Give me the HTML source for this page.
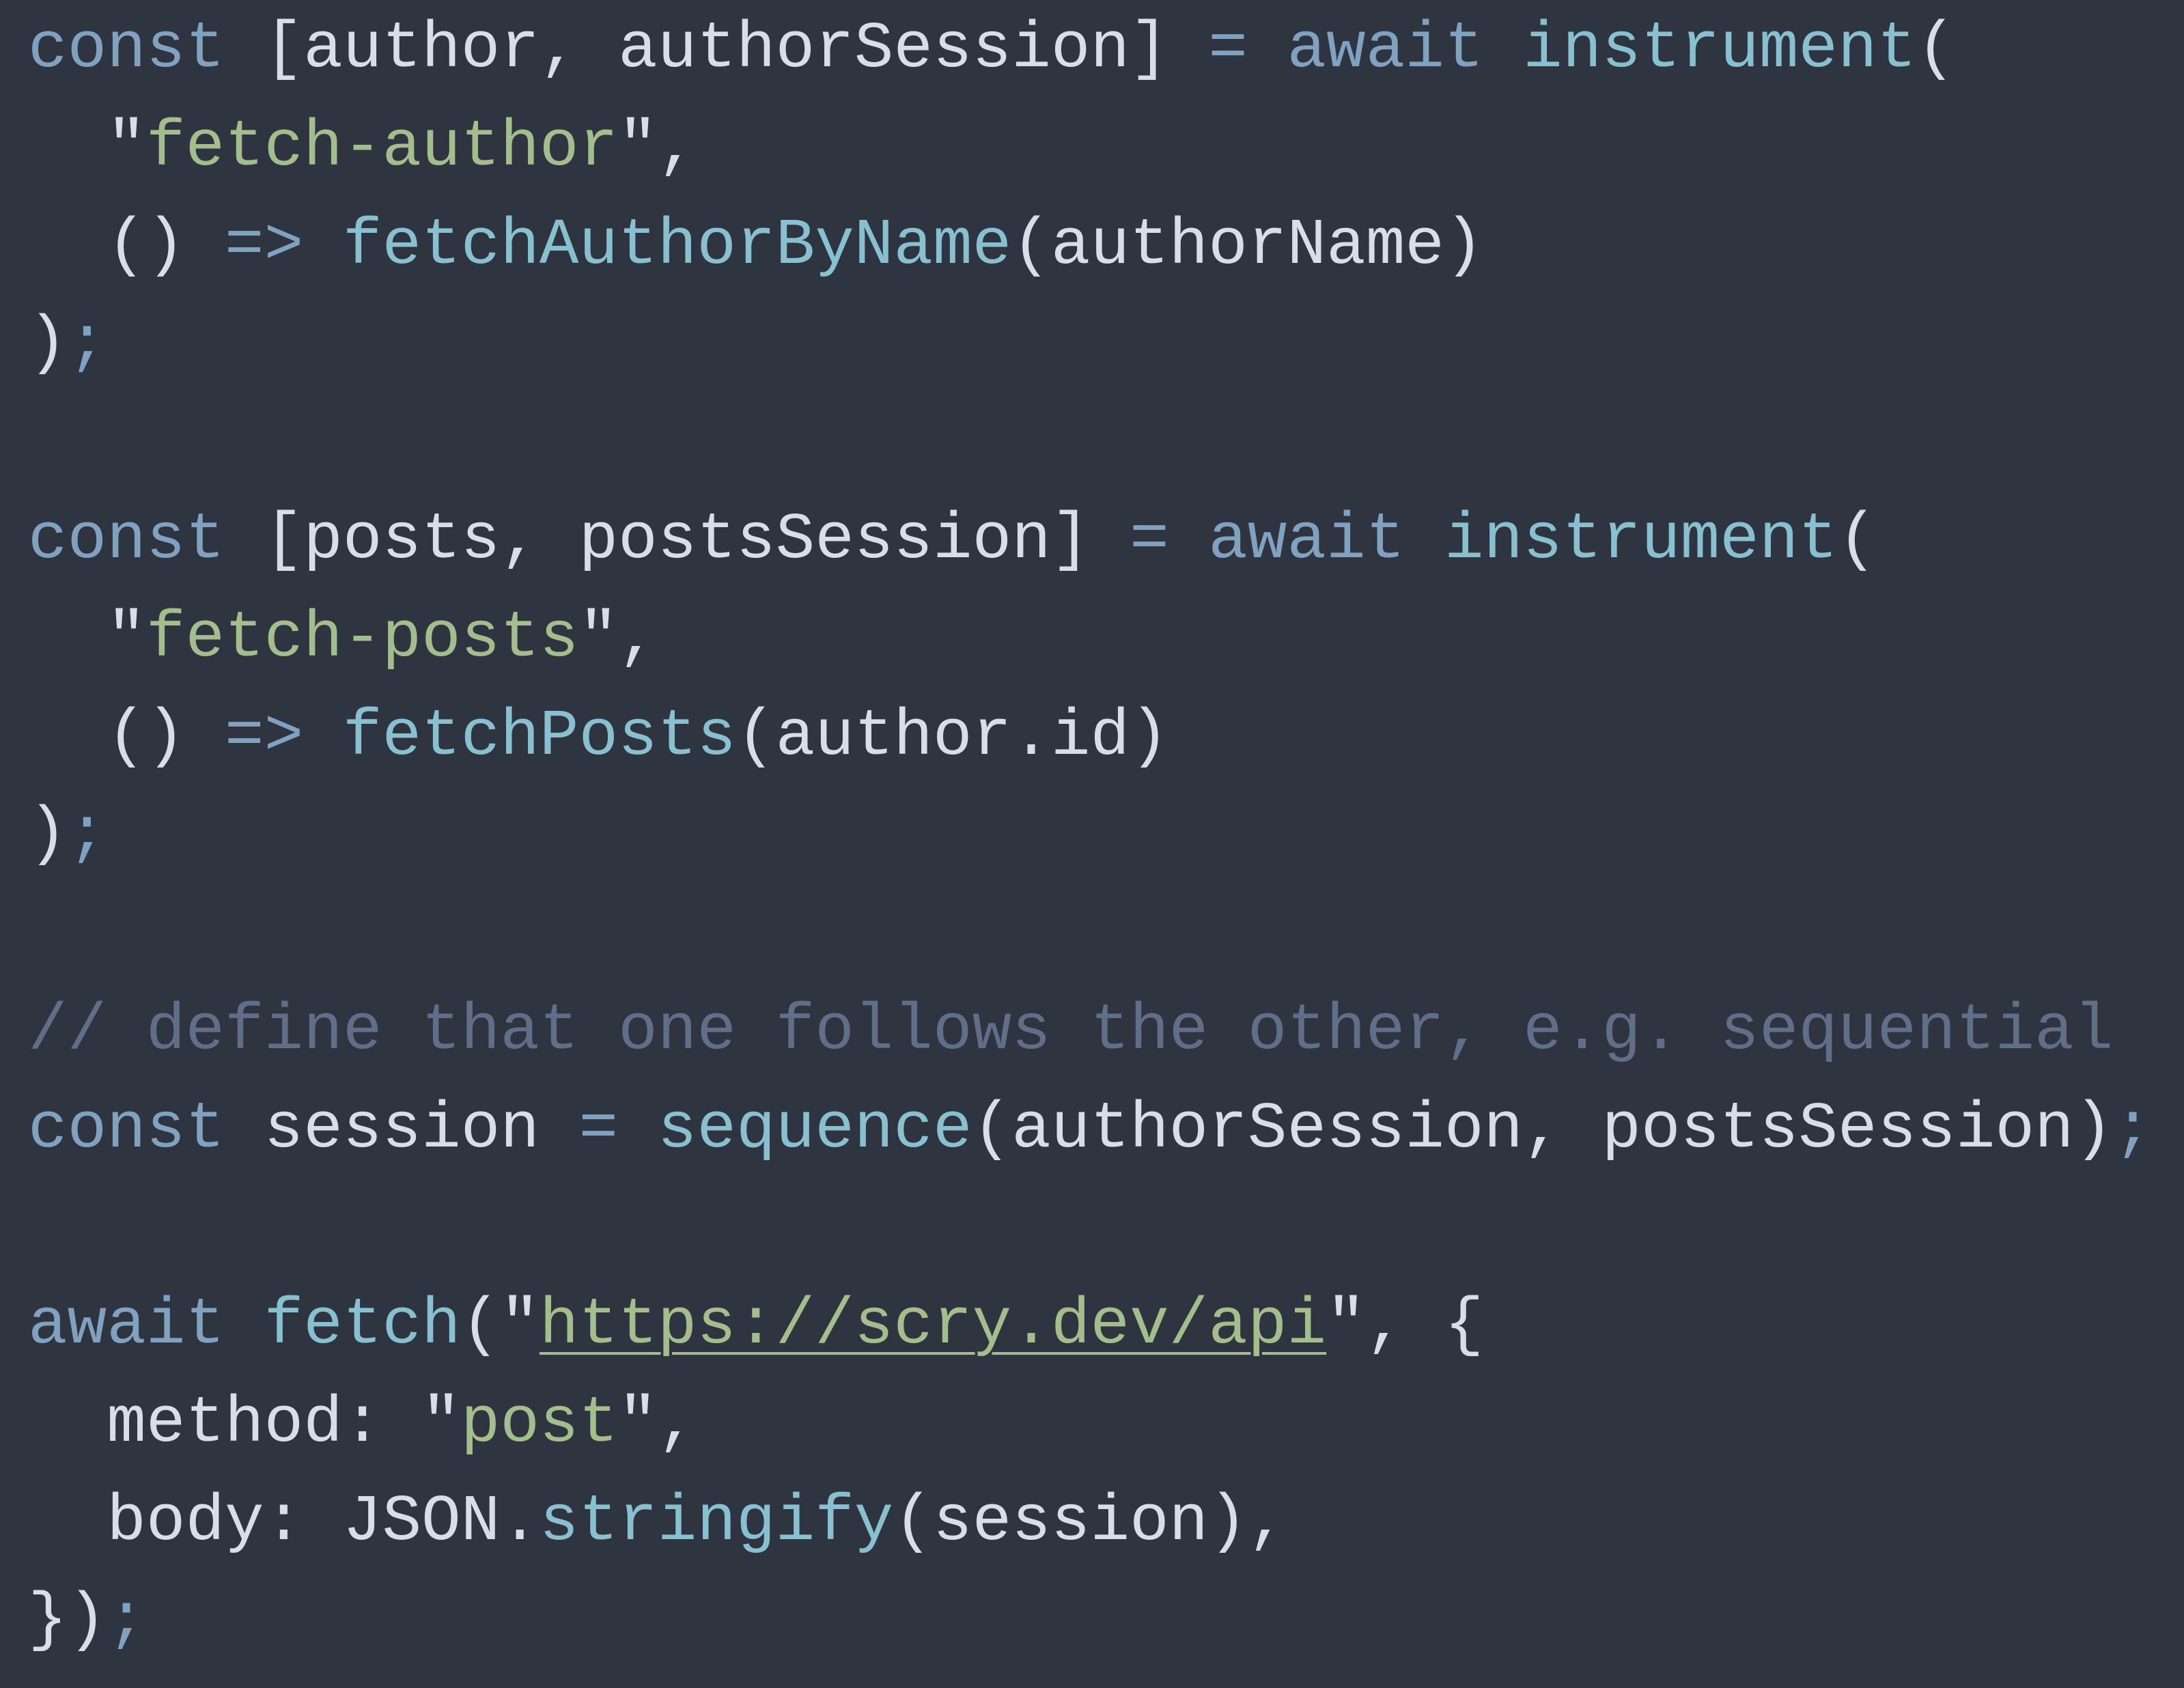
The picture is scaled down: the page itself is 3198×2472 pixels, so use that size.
<!DOCTYPE html>
<html><head><meta charset="utf-8"><style>
html,body{margin:0;padding:0;background:#2e3440;width:3198px;height:2472px;overflow:hidden}
pre{margin:0;padding:0 0 0 41px;font-family:"Liberation Mono",monospace;font-size:96px;line-height:143.8px;color:#d8dee9;white-space:pre}
.k{color:#81a1c1}.f{color:#88c0d0}.s{color:#a3be8c}.c{color:#616e88}
.u{text-decoration:underline;text-decoration-thickness:4px;text-underline-offset:14px}
</style></head><body><pre><span class="k">const</span> [author, authorSession] <span class="k">=</span> <span class="k">await</span> <span class="f">instrument</span>(
  "<span class="s">fetch-author</span>",
  () <span class="k">=&gt;</span> <span class="f">fetchAuthorByName</span>(authorName)
)<span class="k">;</span>

<span class="k">const</span> [posts, postsSession] <span class="k">=</span> <span class="k">await</span> <span class="f">instrument</span>(
  "<span class="s">fetch-posts</span>",
  () <span class="k">=&gt;</span> <span class="f">fetchPosts</span>(author.id)
)<span class="k">;</span>

<span class="c">// define that one follows the other, e.g. sequential</span>
<span class="k">const</span> session <span class="k">=</span> <span class="f">sequence</span>(authorSession, postsSession)<span class="k">;</span>

<span class="k">await</span> <span class="f">fetch</span>("<span class="s u">https://scry.dev/api</span>", {
  method: "<span class="s">post</span>",
  body: JSON.<span class="f">stringify</span>(session),
})<span class="k">;</span></pre></body></html>
